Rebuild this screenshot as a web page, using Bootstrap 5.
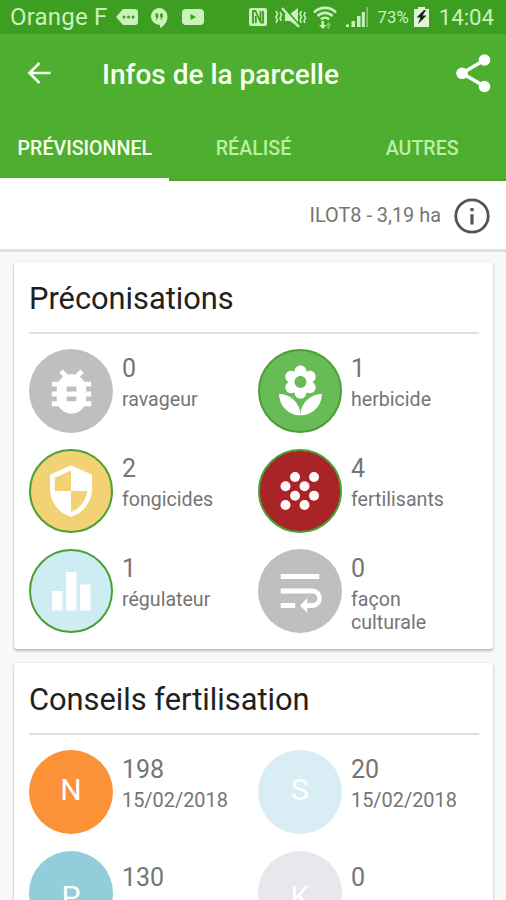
<!DOCTYPE html>
<html lang="fr">
<head>
<meta charset="utf-8">
<meta name="viewport" content="width=device-width, initial-scale=1">
<title>Infos de la parcelle</title>
<link href="https://cdn.jsdelivr.net/npm/bootstrap@5.3.0/dist/css/bootstrap.min.css" rel="stylesheet">
<style>
  html, body { height: 900px; overflow: hidden; }
  body { font-family: Roboto, "Liberation Sans", sans-serif; background: #f9f9f9; color: #757575; }
  svg { display: block; flex: none; }
  .statusbar { height: 34px; background: #3d9e21; color: #c9f3bb; padding: 0 12px 0 10px; }
  .carrier { font-size: 24px; letter-spacing: .2px; line-height: 34px; width: 106px; white-space: nowrap; }
  .clock { font-size: 22.2px; line-height: 36px; }
  .charge { font-size: 16.8px; line-height: 36px; }
  .hangouts { margin: 1px 0 0 7px; }
  .youtube { margin-left: 6px; }
  .mute { margin-left: 8px; }
  .wifi { margin-left: 6px; }
  .signal { margin-left: 8px; }
  .charge { margin-left: 9px; }
  .battery { margin-left: 5px; }
  .clock { margin-left: 10px; }
  .appbar { background: #4eae30; }
  .toolbar { height: 82px; padding: 0 14px 0 27px; }
  .toolbar h1 { font-size: 28px; font-weight: 500; line-height: 84px; color: #f6fff0; margin-left: 51px; }
  .tabs { height: 64px; }
  .tabs a { font-size: 19.6px; font-weight: 500; line-height: 65px; color: #b9f0a4; text-decoration: none; border-bottom: 2px solid #47a32b; height: 64.5px; padding-left: 1px; }
  .tabs a.active { color: #f6fff0; border-bottom: 3px solid #fff; }
  .parcel { height: 72px; border-bottom: 3px solid #dedede; font-size: 19.9px; padding: 3px 15px 0 0; }
  .parcel svg { margin-left: 12px; }
  main { padding-top: 10px; }
  .panel { border: 0; border-radius: 3px; margin: 0 13px 14px 14px; padding: 0 14.5px 0 15px; box-shadow: 0 2px 3px rgba(0,0,0,.25), 0 0 2px rgba(0,0,0,.12); }
  .panel h2 { font-size: 30.8px; font-weight: 400; line-height: 73px; height: 72px; margin: 0; color: #212121; border-bottom: 2px solid #dedede; }
  .cells { display: grid; grid-template-columns: 229px 1fr; row-gap: 16px; padding: 15px 0; }
  .cells.spaced { row-gap: 17px; }
  .disc { width: 84px; height: 84px; flex: none; color: #fff; font-size: 30px; }
  .ring { border: 2px solid #4a9f35; }
  .info { margin-left: 9px; padding-top: 4px; }
  .num { font-size: 25px; line-height: 31px; }
  .lbl { font-size: 19.6px; line-height: 23px; padding-top: 4px; }
  .day { font-size: 19.9px; }
  .late .info { padding-top: 11px; }
  .late .disc { padding-top: 6px; }
  .late .lbl { padding-top: 6px; }
  .up { padding-bottom: 6px; }
  .c-grey { background: #bfbfbf; } .c-green { background: #68bc57; } .c-yellow { background: #f3d276; }
  .c-red { background: #a82427; } .c-sky { background: #cdedf3; } .c-orange { background: #fb9238; }
  .c-ice { background: #d9edf4; } .c-blue { background: #91cddb; } .c-mauve { background: #e9e6ec; }
</style>
</head>
<body>
<div class="statusbar d-flex align-items-center">
  <span class="carrier">Orange F</span>
  <svg width="22" height="18" viewBox="0 0 22 18"><path fill="#c9f3bb" d="M7 1h12q3 0 3 3v10q0 3-3 3H7L0 9z"/><g fill="#3d9e21"><circle cx="8" cy="9" r="1.5"/><circle cx="12.5" cy="9" r="1.5"/><circle cx="17" cy="9" r="1.5"/></g></svg>
  <svg class="hangouts" width="30" height="20" viewBox="-5 0 30 20"><path fill="#c9f3bb" d="M9 0a8.5 8.5 0 1 0 1 17v3c4-2 7.500-6 7.500-11.500A8.500 8.500 0 0 0 9 0z"/><path fill="#3d9e21" d="M5.500 5.500h2.800v3.500L7 11.500H5.900l.8-2.500H5.500zM10 5.500h2.800v3.500l-1.300 2.500h-1.100l.8-2.500H10z"/></svg>
  <svg class="youtube" width="24" height="18" viewBox="0 0 24 18"><rect x="1" y="1" width="22" height="16" rx="4" fill="#c9f3bb"/><path fill="#3d9e21" d="M9.500 6v6l5.500-3z"/></svg>
  <svg class="ms-auto" width="18" height="18" viewBox="0 0 18 18"><rect width="18" height="18" rx="2" fill="#c9f3bb"/><path fill="none" stroke="#3d9e21" stroke-width="1.800" stroke-linejoin="round" d="M4 15.500V3h2.500l5 11V5.500M6.800 8v7M11.500 3v3M11.500 14.700H14V3"/></svg>
  <svg class="mute" width="32" height="21" viewBox="0 0 32 21"><path fill="#c9f3bb" d="M10 7h5l8-6v19l-8-6h-5z"/><path stroke="#3d9e21" stroke-width="3" d="M9 1l16 19"/><path stroke="#c9f3bb" stroke-width="2.200" d="M7 1l17 19"/><path fill="none" stroke="#c9f3bb" stroke-width="1.600" d="M1 4l1.500 3L1 10l1.500 3L1 16M5 5L6.500 8 5 11l1.500 3M26.500 4L25 7l1.500 3-1.500 3 1.500 3M30.500 5L29 8l1.500 3-1.500 3 1 2"/></svg>
  <svg class="wifi" width="24" height="25" viewBox="0 0 24 25"><path fill="none" stroke="#c9f3bb" stroke-width="2.600" d="M1 7.500a15.500 15.500 0 0 1 22 0M4.500 11a10.500 10.500 0 0 1 15 0M8 14.500a5.500 5.500 0 0 1 8 0"/><path fill="#c9f3bb" d="M8.500 16h2.500v4h2.500l-3.700 4L6 20h2.500z"/><path fill="#7dca67" d="M16.500 24h-2v-3.500h-1.700l2.700-3.500 2.700 3.500h-1.700z"/></svg>
  <svg class="signal" width="24" height="22" viewBox="0 0 24 22"><path fill="#c9f3bb" d="M1 18.500h3V21H1zM6.500 15h3.500v6H6.500zM12 10h3.500v11H12zM16.800 6h3v15h-3z"/><path fill="#7dca67" d="M21.300 1H23v20h-1.700z"/></svg>
  <span class="charge">73%</span>
  <svg class="battery" width="15" height="20" viewBox="0 0 15 20"><path fill="#dff7d6" d="M4 0h7v2h4v18H0V2h4z"/><path fill="#13290c" d="M10 3L2.500 10.500h4L4 17l8.500-8.500h-4L12 3z"/></svg>
  <span class="clock">14:04</span>
</div>
<header class="appbar">
  <div class="toolbar d-flex align-items-center">
    <svg width="24" height="24" viewBox="0 0 24 24" class="mb-1"><path fill="none" stroke="#f6fff0" stroke-width="2.700" d="M23.500 12H3M12.500 2L2.500 12l10 10"/></svg>
    <h1 class="mb-0">Infos de la parcelle</h1>
    <svg class="ms-auto mb-1" width="38" height="40" viewBox="0 0 38 40"><path fill="none" stroke="#fff" stroke-width="3.500" d="M30.500 7L8 20.300l22.500 13"/><g fill="#fff"><circle cx="30.500" cy="7" r="5.800"/><circle cx="8" cy="20.300" r="5.800"/><circle cx="30.500" cy="33.500" r="5.800"/></g></svg>
  </div>
  <nav class="tabs row g-0 text-center">
    <a class="col active" href="#">PRÉVISIONNEL</a>
    <a class="col" href="#">RÉALISÉ</a>
    <a class="col" href="#">AUTRES</a>
  </nav>
</header>
<div class="parcel bg-white d-flex align-items-center justify-content-end">
  <span>ILOT8 - 3,19 ha</span>
  <svg width="38" height="38" viewBox="0 0 38 38"><circle cx="19" cy="19" r="16.200" fill="none" stroke="#555" stroke-width="2.800"/><path fill="#555" d="M17.400 11h3.200v3.300h-3.200zM17.400 17.300h3.200v10.200h-3.200z"/></svg>
</div>
<main>
  <section class="panel card">
    <h2>Préconisations</h2>
    <div class="cells">
      <div class="d-flex">
        <div class="disc c-grey rounded-circle d-flex align-items-center justify-content-center"><svg width="59" height="59" viewBox="0 0 24 24" fill="#fff"><path d="M20 8h-2.810c-.45-.78-1.070-1.450-1.820-1.960L17 4.410 15.590 3l-2.170 2.170C12.960 5.060 12.490 5 12 5c-.49 0-.96.06-1.410.17L8.410 3 7 4.410l1.620 1.630C7.880 6.550 7.260 7.220 6.810 8H4v2h2.090c-.05.33-.09.66-.09 1v1H4v2h2v1c0 .34.04.67.09 1H4v2h2.810c1.040 1.790 2.970 3 5.190 3s4.150-1.210 5.190-3H20v-2h-2.090c.05-.33.09-.66.09-1v-1h2v-2h-2v-1c0-.34-.04-.67-.09-1H20V8zm-6 8h-4v-2h4v2zm0-4h-4v-2h4v2z"/></svg></div>
        <div class="info"><div class="num">0</div><div class="lbl">ravageur</div></div>
      </div>
      <div class="d-flex">
        <div class="disc c-green ring rounded-circle d-flex align-items-center justify-content-center"><svg width="57" height="57" viewBox="0 0 24 24" fill="#fff"><path d="M12 22c4.970 0 9-4.030 9-9-4.970 0-9 4.030-9 9zM5.600 10.250c0 1.380 1.120 2.500 2.500 2.500.53 0 1.010-.16 1.420-.44l-.02.19c0 1.380 1.120 2.500 2.500 2.500s2.500-1.120 2.500-2.500l-.02-.19c.4.28.89.44 1.420.44 1.380 0 2.500-1.120 2.500-2.500 0-1-.59-1.850-1.430-2.250.84-.4 1.430-1.250 1.430-2.250 0-1.380-1.120-2.500-2.500-2.500-.53 0-1.010.16-1.420.44l.02-.19C14.500 2.120 13.380 1 12 1S9.500 2.120 9.500 3.500l.02.19c-.4-.28-.89-.44-1.420-.44-1.380 0-2.500 1.120-2.500 2.500 0 1 .59 1.850 1.430 2.250-.84.4-1.430 1.250-1.430 2.250zM12 5.500c1.380 0 2.500 1.120 2.500 2.500s-1.120 2.500-2.500 2.500S9.500 9.380 9.500 8s1.120-2.500 2.500-2.500zM3 13c0 4.970 4.030 9 9 9 0-4.970-4.030-9-9-9z"/></svg></div>
        <div class="info"><div class="num">1</div><div class="lbl">herbicide</div></div>
      </div>
      <div class="d-flex">
        <div class="disc c-yellow ring rounded-circle d-flex align-items-center justify-content-center"><svg width="56" height="56" viewBox="0 0 24 24" fill="#fff"><path d="M12 1L3 5v6c0 5.550 3.840 10.740 9 12 5.160-1.260 9-6.450 9-12V5l-9-4zm0 10.990h7c-.53 4.120-3.280 7.790-7 8.940V12H5V6.300l7-3.110v8.800z"/></svg></div>
        <div class="info"><div class="num">2</div><div class="lbl">fongicides</div></div>
      </div>
      <div class="d-flex">
        <div class="disc c-red ring rounded-circle d-flex align-items-center justify-content-center"><svg width="40" height="40" viewBox="0 0 40 40" fill="#fffaf5"><circle cx="15" cy="6" r="5"/><circle cx="34" cy="6" r="5"/><circle cx="5.500" cy="15.300" r="5"/><circle cx="24.500" cy="15.300" r="5"/><circle cx="15" cy="24.700" r="5"/><circle cx="34" cy="24.700" r="5"/><circle cx="5.500" cy="34" r="5"/><circle cx="24.500" cy="34" r="5"/></svg></div>
        <div class="info"><div class="num">4</div><div class="lbl">fertilisants</div></div>
      </div>
      <div class="d-flex">
        <div class="disc c-sky ring rounded-circle d-flex align-items-center justify-content-center"><svg width="40" height="40" viewBox="0 0 40 40" fill="#fff"><path d="M1 20h10.500v19.500H1zM15 1h10.500v38.500H15zM29 13.500h10.500v26H29z"/></svg></div>
        <div class="info"><div class="num">1</div><div class="lbl">régulateur</div></div>
      </div>
      <div class="d-flex">
        <div class="disc c-grey rounded-circle d-flex align-items-center justify-content-center"><svg width="58" height="58" viewBox="0 0 24 24" fill="#fff"><path d="M4 19h6v-2H4v2zM20 5H4v2h16V5zm-3 6H4v2h13.250c1.100 0 2 .9 2 2s-.9 2-2 2H15v-2l-3 3 3 3v-2h2c2.210 0 4-1.790 4-4s-1.790-4-4-4z"/></svg></div>
        <div class="info"><div class="num">0</div><div class="lbl">façon<br>culturale</div></div>
      </div>
    </div>
  </section>
  <section class="panel card">
    <h2>Conseils fertilisation</h2>
    <div class="cells spaced">
      <div class="d-flex">
        <div class="disc c-orange rounded-circle d-flex align-items-center justify-content-center up">N</div>
        <div class="info"><div class="num">198</div><div class="lbl day">15/02/2018</div></div>
      </div>
      <div class="d-flex">
        <div class="disc c-ice rounded-circle d-flex align-items-center justify-content-center up">S</div>
        <div class="info"><div class="num">20</div><div class="lbl day">15/02/2018</div></div>
      </div>
      <div class="d-flex late">
        <div class="disc c-blue rounded-circle d-flex align-items-center justify-content-center">P</div>
        <div class="info"><div class="num">130</div><div class="lbl day">15/02/2018</div></div>
      </div>
      <div class="d-flex late">
        <div class="disc c-mauve rounded-circle d-flex align-items-center justify-content-center">K</div>
        <div class="info"><div class="num">0</div><div class="lbl day">15/02/2018</div></div>
      </div>
    </div>
  </section>
</main>
<script src="https://cdn.jsdelivr.net/npm/bootstrap@5.3.0/dist/js/bootstrap.bundle.min.js"></script>
</body>
</html>
